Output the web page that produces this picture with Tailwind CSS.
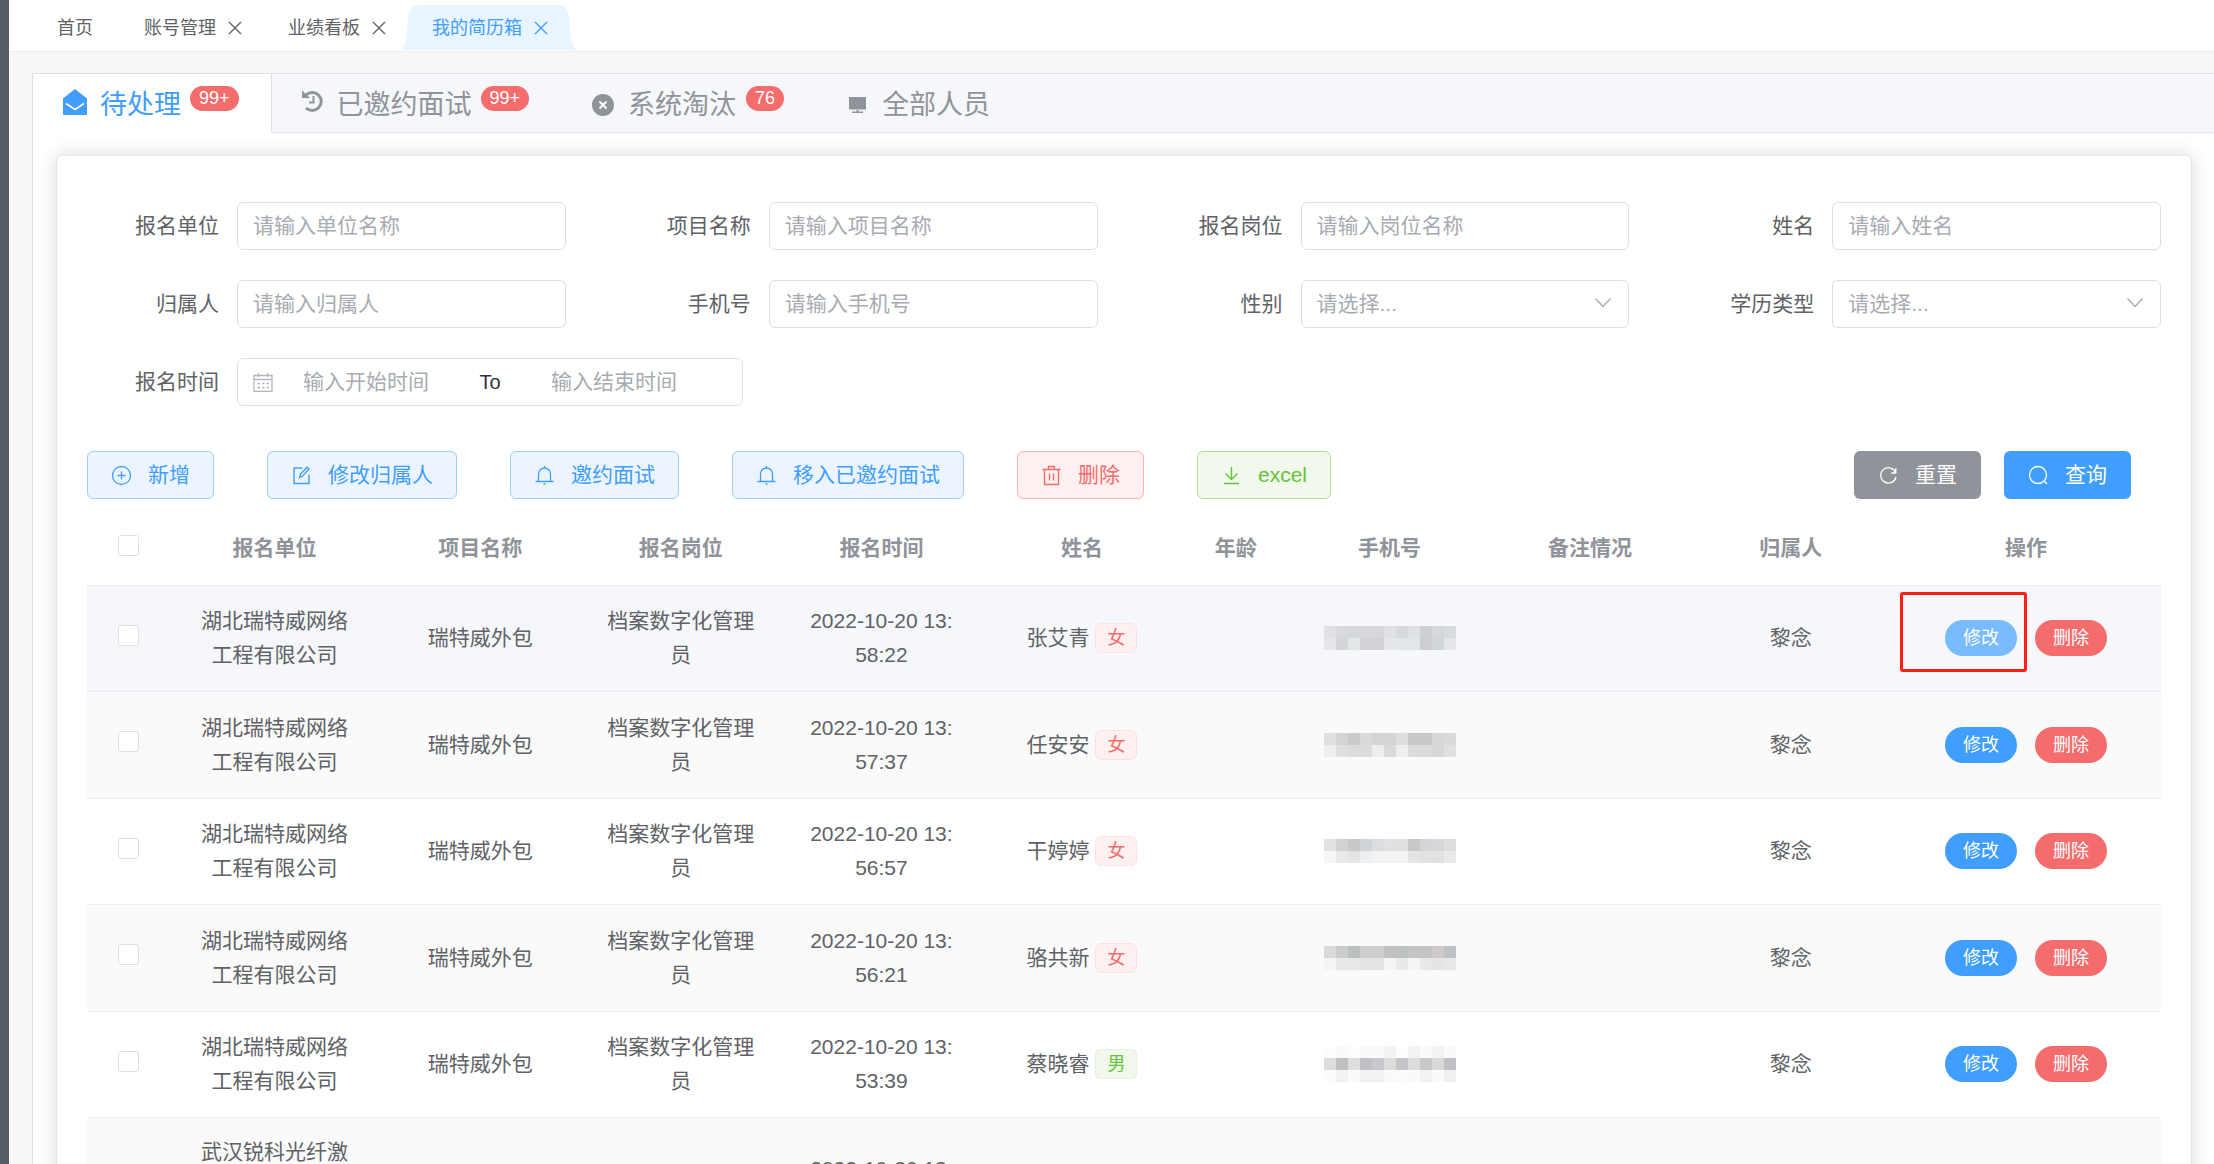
<!DOCTYPE html>
<html lang="zh-CN">
<head>
    <meta charset="UTF-8">
    <meta name="viewport" content="width=device-width, initial-scale=1.0">
    <title>我的简历箱</title>
    <script src="https://cdn.jsdelivr.net/npm/@tailwindcss/browser@4"></script>
</head>
<body class="h-screen overflow-hidden flex bg-[#f7f7f7] font-['Liberation_Sans','Noto_Sans_CJK_SC',sans-serif] text-[21px] text-[#606266]">
    <div class="w-[9px] shrink-0 bg-[#545c64]"></div>

    <div class="flex-1 min-w-0 flex flex-col">
        <!-- pestañas de navegacion -->
        <nav class="h-[52px] shrink-0 flex items-center gap-[46px] pl-12 bg-white border-b border-[#ededed] text-lg">
            <a href="#" class="mr-[5px] pt-1">首页</a>
            <div class="flex items-center gap-3 pt-1">
                <a href="#">账号管理</a>
                <button aria-label="关闭账号管理"><svg class="size-[14px]" viewBox="0 0 14 14" fill="none" stroke="currentColor" stroke-width="1.4"><path d="M1 1l12 12M13 1L1 13"/></svg></button>
            </div>
            <div class="flex items-center gap-3 pt-1">
                <a href="#">业绩看板</a>
                <button aria-label="关闭业绩看板"><svg class="size-[14px]" viewBox="0 0 14 14" fill="none" stroke="currentColor" stroke-width="1.4"><path d="M1 1l12 12M13 1L1 13"/></svg></button>
            </div>
            <div class="relative self-stretch flex items-center gap-3 pt-1 text-[#409eff]">
                <svg class="absolute -left-8 bottom-px w-[178px] h-[45px]" viewBox="0 0 178 45" fill="#e8f4ff"><path d="M0 45C6 43 7 34 8 12Q9 0 20 0H158Q168 0 169 12C170 34 172 43 178 45Z"/></svg>
                <a href="#" class="relative">我的简历箱</a>
                <button class="relative" aria-label="关闭我的简历箱"><svg class="size-[14px]" viewBox="0 0 14 14" fill="none" stroke="currentColor" stroke-width="1.4"><path d="M1 1l12 12M13 1L1 13"/></svg></button>
            </div>
        </nav>

        <main class="flex-1 mt-[21px] ml-[23px] bg-white border-t border-l border-[#dcdfe6]">
            <div class="flex h-[59px] bg-[#f5f7fa] text-[27px] text-[#909399]">
                <button class="flex items-center pt-1 pl-[30px] pr-8 bg-white border-r border-[#dcdfe6] text-[#409eff]">
                    <svg class="w-6 h-[26px] mr-[13px] mb-2" viewBox="0 0 24 26"><path d="M0 9.500L12 0l12 9.500V25a1 1 0 0 1-1 1H1a1 1 0 0 1-1-1z" fill="#409eff"/><path d="M3 14.500l9 6 9-6" fill="none" stroke="#fff" stroke-width="1.600"/></svg>
                    待处理
                    <span class="self-start mt-2 ml-[9px] h-[25px] px-[9px] rounded-full bg-[#f56c6c] text-white text-lg leading-[25px]">99+</span>
                </button>
                <button class="flex items-center pt-1 pl-[30px] pr-[30px] border-b border-[#e4e7ed]">
                    <svg class="w-[21px] h-6 mr-[14px] mb-2" viewBox="0 0 21 24" fill="none" stroke="#909399" stroke-width="3"><path d="M4 6A9 9 0 1 1 4 19"/><path d="M0 1.500V9h8z" fill="#909399" stroke="none"/><path d="M11.500 7v6.500H7" stroke-width="2"/></svg>
                    已邀约面试
                    <span class="self-start mt-2 ml-[9px] h-[25px] px-[9px] rounded-full bg-[#f56c6c] text-white text-lg leading-[25px]">99+</span>
                </button>
                <button class="flex items-center pt-1 pl-[33px] pr-8 border-b border-[#e4e7ed]">
                    <svg class="size-[22px] mr-[14px]" viewBox="0 0 22 22"><circle cx="11" cy="11" r="11" fill="#909399"/><path d="M7.500 7.500l7 7M14.500 7.500l-7 7" stroke="#fff" stroke-width="2"/></svg>
                    系统淘汰
                    <span class="self-start mt-2 ml-[10px] h-[25px] px-[9px] rounded-full bg-[#f56c6c] text-white text-lg leading-[25px]">76</span>
                </button>
                <button class="flex-1 flex items-center pt-1 pl-[33px] border-b border-[#e4e7ed]">
                    <svg class="w-[17px] h-4 mr-4" viewBox="0 0 17 16" fill="#909399"><path d="M0 0h17v12.500H0zM7.500 13h2v1.500h-2zM3 14.500h11V16H3z"/></svg>
                    全部人员
                </button>
            </div>

            <div class="mt-[22px] ml-[23px] mr-[22px] h-full px-[30px] pt-[46px] bg-white border border-[#e4e7ed] rounded-md shadow-[0_0_18px_rgba(0,0,0,0.15)]">
                <form>
                    <div class="grid grid-cols-4 gap-x-[53px] gap-y-[30px]">
                        <div class="flex items-center">
                            <label for="unidad" class="w-[150px] pr-[18px] text-right">报名单位</label>
                            <input id="unidad" type="text" placeholder="请输入单位名称" class="flex-1 min-w-0 h-12 px-[15px] border border-[#dcdfe6] rounded-md placeholder:text-[#a8abb2]">
                        </div>
                        <div class="flex items-center">
                            <label for="proyecto" class="w-[150px] pr-[18px] text-right">项目名称</label>
                            <input id="proyecto" type="text" placeholder="请输入项目名称" class="flex-1 min-w-0 h-12 px-[15px] border border-[#dcdfe6] rounded-md placeholder:text-[#a8abb2]">
                        </div>
                        <div class="flex items-center">
                            <label for="puesto" class="w-[150px] pr-[18px] text-right">报名岗位</label>
                            <input id="puesto" type="text" placeholder="请输入岗位名称" class="flex-1 min-w-0 h-12 px-[15px] border border-[#dcdfe6] rounded-md placeholder:text-[#a8abb2]">
                        </div>
                        <div class="flex items-center">
                            <label for="nombre" class="w-[150px] pr-[18px] text-right">姓名</label>
                            <input id="nombre" type="text" placeholder="请输入姓名" class="flex-1 min-w-0 h-12 px-[15px] border border-[#dcdfe6] rounded-md placeholder:text-[#a8abb2]">
                        </div>
                        <div class="flex items-center">
                            <label for="responsable" class="w-[150px] pr-[18px] text-right">归属人</label>
                            <input id="responsable" type="text" placeholder="请输入归属人" class="flex-1 min-w-0 h-12 px-[15px] border border-[#dcdfe6] rounded-md placeholder:text-[#a8abb2]">
                        </div>
                        <div class="flex items-center">
                            <label for="telefono" class="w-[150px] pr-[18px] text-right">手机号</label>
                            <input id="telefono" type="text" placeholder="请输入手机号" class="flex-1 min-w-0 h-12 px-[15px] border border-[#dcdfe6] rounded-md placeholder:text-[#a8abb2]">
                        </div>
                        <div class="flex items-center">
                            <label for="sexo" class="w-[150px] pr-[18px] text-right">性别</label>
                            <div class="relative flex-1">
                                <select id="sexo" class="appearance-none w-full h-12 px-[15px] bg-white border border-[#dcdfe6] rounded-md text-[#a8abb2]">
                                    <option>请选择...</option>
                                </select>
                                <svg class="absolute right-[18px] top-[18px] w-4 h-[10px] pointer-events-none" viewBox="0 0 16 10" fill="none" stroke="#a8abb2" stroke-width="1.300"><path d="M0.500 0.500L8 8.500l7.500-8"/></svg>
                            </div>
                        </div>
                        <div class="flex items-center">
                            <label for="estudios" class="w-[150px] pr-[18px] text-right">学历类型</label>
                            <div class="relative flex-1">
                                <select id="estudios" class="appearance-none w-full h-12 px-[15px] bg-white border border-[#dcdfe6] rounded-md text-[#a8abb2]">
                                    <option>请选择...</option>
                                </select>
                                <svg class="absolute right-[18px] top-[18px] w-4 h-[10px] pointer-events-none" viewBox="0 0 16 10" fill="none" stroke="#a8abb2" stroke-width="1.300"><path d="M0.500 0.500L8 8.500l7.500-8"/></svg>
                            </div>
                        </div>
                    </div>
                    <div class="flex items-center mt-[30px]">
                        <label for="inicio" class="w-[150px] pr-[18px] text-right">报名时间</label>
                        <div class="flex items-center h-12 pl-[15px] pr-9 border border-[#dcdfe6] rounded-md">
                            <svg class="size-[21px]" viewBox="0 0 21 21" fill="none" stroke="#b4b7be" stroke-width="1.300"><path d="M1 3.500h18v15.800H1zM1 7.500h18M5.500 1v4M14.500 1v4"/><path d="M4.500 11.500h2.500M9 11.500h2.500M13.500 11.500H16M4.500 15.500h2.500M9 15.500h2.500M13.500 15.500H16"/></svg>
                            <input id="inicio" type="text" placeholder="输入开始时间" class="w-[184px] text-center placeholder:text-[#a8abb2]">
                            <span class="w-16 text-center text-xl text-[#303133]">To</span>
                            <input id="fin" type="text" aria-label="结束时间" placeholder="输入结束时间" class="w-[184px] text-center placeholder:text-[#a8abb2]">
                        </div>
                    </div>

                    <div class="flex items-center gap-[53px] mt-[45px]">
                        <button type="button" class="flex items-center gap-4 h-12 px-[23px] bg-[#ecf5ff] border border-[#a0cfff] rounded-md text-[#409eff]">
                            <svg class="size-[21px]" viewBox="0 0 21 21" fill="none" stroke="currentColor" stroke-width="1.300"><circle cx="10.500" cy="10.500" r="9"/><path d="M6.500 10.500h8M10.500 6.500v8"/></svg>新增
                        </button>
                        <button type="button" class="flex items-center gap-4 h-12 px-[23px] bg-[#ecf5ff] border border-[#a0cfff] rounded-md text-[#409eff]">
                            <svg class="size-[21px]" viewBox="0 0 21 21" fill="none" stroke="currentColor" stroke-width="1.400"><path d="M11.500 3H3v15.500h15V9.500M8.500 12.500l1-3.500L16 2.200l2 1.800-7 7.500z"/></svg>修改归属人
                        </button>
                        <button type="button" class="flex items-center gap-4 h-12 px-[23px] bg-[#ecf5ff] border border-[#a0cfff] rounded-md text-[#409eff]">
                            <svg class="size-[21px]" viewBox="0 0 21 21" fill="none" stroke="currentColor" stroke-width="1.300"><path d="M1.500 16.500h18M4.500 16.500V9a6 6 0 0 1 12 0v7.500M10.500 1v2M9.500 19h2"/></svg>邀约面试
                        </button>
                        <button type="button" class="flex items-center gap-4 h-12 px-[23px] bg-[#ecf5ff] border border-[#a0cfff] rounded-md text-[#409eff]">
                            <svg class="size-[21px]" viewBox="0 0 21 21" fill="none" stroke="currentColor" stroke-width="1.300"><path d="M1.500 16.500h18M4.500 16.500V9a6 6 0 0 1 12 0v7.500M10.500 1v2M9.500 19h2"/></svg>移入已邀约面试
                        </button>
                        <button type="button" class="flex items-center gap-4 h-12 px-[23px] bg-[#fef0f0] border border-[#fab6b6] rounded-md text-[#f56c6c]">
                            <svg class="size-[21px]" viewBox="0 0 21 21" fill="none" stroke="currentColor" stroke-width="1.400"><path d="M1.500 4.500h18M3.500 4.500v15h14v-15M7.500 4.500V1.500h6v3M8.500 8.500v7M12.500 8.500v7"/></svg>删除
                        </button>
                        <button type="button" class="flex items-center gap-4 h-12 px-[23px] bg-[#f0f9eb] border border-[#b3e19d] rounded-md text-[#67c23a]">
                            <svg class="size-[21px]" viewBox="0 0 21 21" fill="none" stroke="currentColor" stroke-width="1.400"><path d="M10.500 2v12.500M4.500 8.500l6 6 6-6M3 18.500h15"/></svg>excel
                        </button>
                        <div class="ml-auto mr-[30px] flex gap-[23px]">
                            <button type="reset" class="flex items-center gap-4 h-12 px-6 bg-[#909399] rounded-md text-white">
                                <svg class="size-[21px]" viewBox="0 0 21 21" fill="none" stroke="currentColor" stroke-width="1.300"><path d="M17.800 8A7.700 7.700 0 1 0 18 12M17.800 3v5h-4.500"/></svg>重置
                            </button>
                            <button type="submit" class="flex items-center gap-4 h-12 px-6 bg-[#409eff] rounded-md text-white">
                                <svg class="size-[21px]" viewBox="0 0 21 21" fill="none" stroke="currentColor" stroke-width="1.300"><circle cx="10" cy="10" r="8.500"/><path d="M16 16l3 3"/></svg>查询
                            </button>
                        </div>
                    </div>
                </form>

                <table class="w-full table-fixed mt-[13px] text-center leading-[34px]">
                    <colgroup>
                        <col class="w-[82px]">
                        <col class="w-[211px]">
                        <col><col><col><col>
                        <col class="w-[107px]">
                        <col><col><col>
                        <col class="w-[270px]">
                    </colgroup>
                    <thead class="text-[#909399]">
                        <tr class="h-[73px] border-b border-[#ebeef5]">
                            <th><input type="checkbox" aria-label="全选" class="appearance-none align-middle size-[21px] mb-2 bg-white border border-[#dcdfe6] rounded-[3px]"></th>
                            <th>报名单位</th>
                            <th>项目名称</th>
                            <th>报名岗位</th>
                            <th>报名时间</th>
                            <th>姓名</th>
                            <th>年龄</th>
                            <th>手机号</th>
                            <th>备注情况</th>
                            <th>归属人</th>
                            <th>操作</th>
                        </tr>
                    </thead>
                    <tbody id="candidatos"></tbody>
                </table>
            </div>
        </main>
    </div>

    <script>
        // bloques: cada linea es un tramo de grises que tapa el numero de telefono
        const candidatos = [
            { unidad: '湖北瑞特威网络工程有限公司', puesto: '档案数字化管理员', hora: '2022-10-20 13:58:22', nombre: '张艾青', sexo: '女', bloques: ['dfe1e4 d8dadd d7d8da d8d9dc d6d7da e0e1e5 d7d9dd dfe1e5 cfd0d4 d5d7db d7dade', 'e4e6e9 d6d6d7 e1e6e8 d1d2d5 d1d2d5 e4e6ea e3e6e9 e2e6e9 cdced2 d1d4d8 e4e6ea'] },
            { unidad: '湖北瑞特威网络工程有限公司', puesto: '档案数字化管理员', hora: '2022-10-20 13:57:37', nombre: '任安安', sexo: '女', bloques: ['dfdfdf d4d4d4 cacbcc d9dbda d5d5d5 d5d5d5 dedede c8c9c9 c8c9c9 d6d7d9 d9dadb', 'eeeeee e0e0e0 dcdcdd dcdcdc eeeeee dadada eeeeee dcdcdc dbdbdb d8d8d8 dfe0e1'] },
            { unidad: '湖北瑞特威网络工程有限公司', puesto: '档案数字化管理员', hora: '2022-10-20 13:56:57', nombre: '干婷婷', sexo: '女', bloques: ['e0e2e1 d3d2d0 c8c9cb d1d4d7 dcdde0 e0e2e1 e1e0de c8c8c8 d5d6da d6d7d9 dddee0', 'f5f5f5 e9e9e9 e4e4e4 eeeff1 f3f3f3 f4f4f4 f3f3f1 e5e5e5 e2e2e2 e0e2e1 e8e9ea'] },
            { unidad: '湖北瑞特威网络工程有限公司', puesto: '档案数字化管理员', hora: '2022-10-20 13:56:21', nombre: '骆共新', sexo: '女', bloques: ['d9dadc cccccc babfbf cecece cecece c1c1c1 bcc0bf c3c4c5 c3c4c5 cdcac9 bec2c5', 'f4f4f4 e7e9e8 e8e8e8 e2e4e3 e2e4e3 f4f4f4 e7eae9 f4f4f4 e8e8e8 e2e4e6 e8e8e8'] },
            { unidad: '湖北瑞特威网络工程有限公司', puesto: '档案数字化管理员', hora: '2022-10-20 13:53:39', nombre: '蔡晓睿', sexo: '男', bloques: ['fdfdfd fafafa fdfdfd fafafa fafafa f3f3f3 fdfdfd f3f3f3 fafafa f3f3f3 fafafa', 'dddddd c0c0c0 dddee0 c0c1c4 c7c8cb dddddd c4c5c8 dddddd c7c8ca dad9d8 c0c1c5', 'fafcfb f2f2f2 fafafa f2f2f2 f2f2f2 fafafa f9fcfb fafafa f2f2f2 fafafa f0f0f0'] },
            { unidad: '武汉锐科光纤激光器股份有限公司', puesto: '操作员', hora: '2022-10-20 13:52:10', nombre: '李文', sexo: '男', bloques: ['dddddd c8c8c8 d4d4d4 c8c8c8 d4d4d4 dddddd c8c8c8 d4d4d4 c8c8c8 dddddd d4d4d4'] }
        ];

        const etiqueta = {
            '女': 'bg-[#fef0f0] border-[#fde2e2] text-[#f56c6c]',
            '男': 'bg-[#f0f9eb] border-[#e1f3d8] text-[#67c23a]'
        };

        document.getElementById('candidatos').innerHTML = candidatos.map((c, i) => `
            <tr class="${i === 0 ? 'bg-[#f5f7fa]' : 'even:bg-[#fafafa]'} odd:h-[106px] even:h-[107px] border-b border-[#ebeef5]">
                <td><input type="checkbox" aria-label="选择${c.nombre}" class="appearance-none align-middle size-[21px] mb-2 bg-white border border-[#dcdfe6] rounded-[3px]"></td>
                <td class="px-6 py-[17px] break-all">${c.unidad}</td>
                <td>瑞特威外包</td>
                <td class="px-6 break-all">${c.puesto}</td>
                <td class="px-6 break-all">${c.hora}</td>
                <td><div class="flex items-center justify-center gap-[6px]">${c.nombre}<span class="w-[42px] h-[30px] border rounded-md text-lg leading-7 ${etiqueta[c.sexo]}">${c.sexo}</span></div></td>
                <td></td>
                <td><svg class="mx-auto w-[132px]" viewBox="0 0 132 ${c.bloques.length * 12}" shape-rendering="crispEdges">${c.bloques.map((b, y) => b.split(' ').map((color, x) => `<rect x="${x * 12}" y="${y * 12}" width="12" height="12" fill="#${color}"/>`).join('')).join('')}</svg></td>
                <td></td>
                <td>黎念</td>
                <td>
                    <div class="flex justify-center gap-[18px] text-lg text-white">
                        <div class="relative flex">
                            <button class="w-[72px] h-9 rounded-full ${i === 0 ? 'bg-[#79bbff]' : 'bg-[#409eff]'}">修改</button>
                            ${i === 0 ? '<div class="absolute -top-7 -left-[45px] w-[127px] h-20 border-3 border-[#ff1f13] rounded-[3px] pointer-events-none"></div>' : ''}
                        </div>
                        <button class="w-[72px] h-9 rounded-full bg-[#f56c6c]">删除</button>
                    </div>
                </td>
            </tr>`).join('');
    </script>
</body>
</html>
